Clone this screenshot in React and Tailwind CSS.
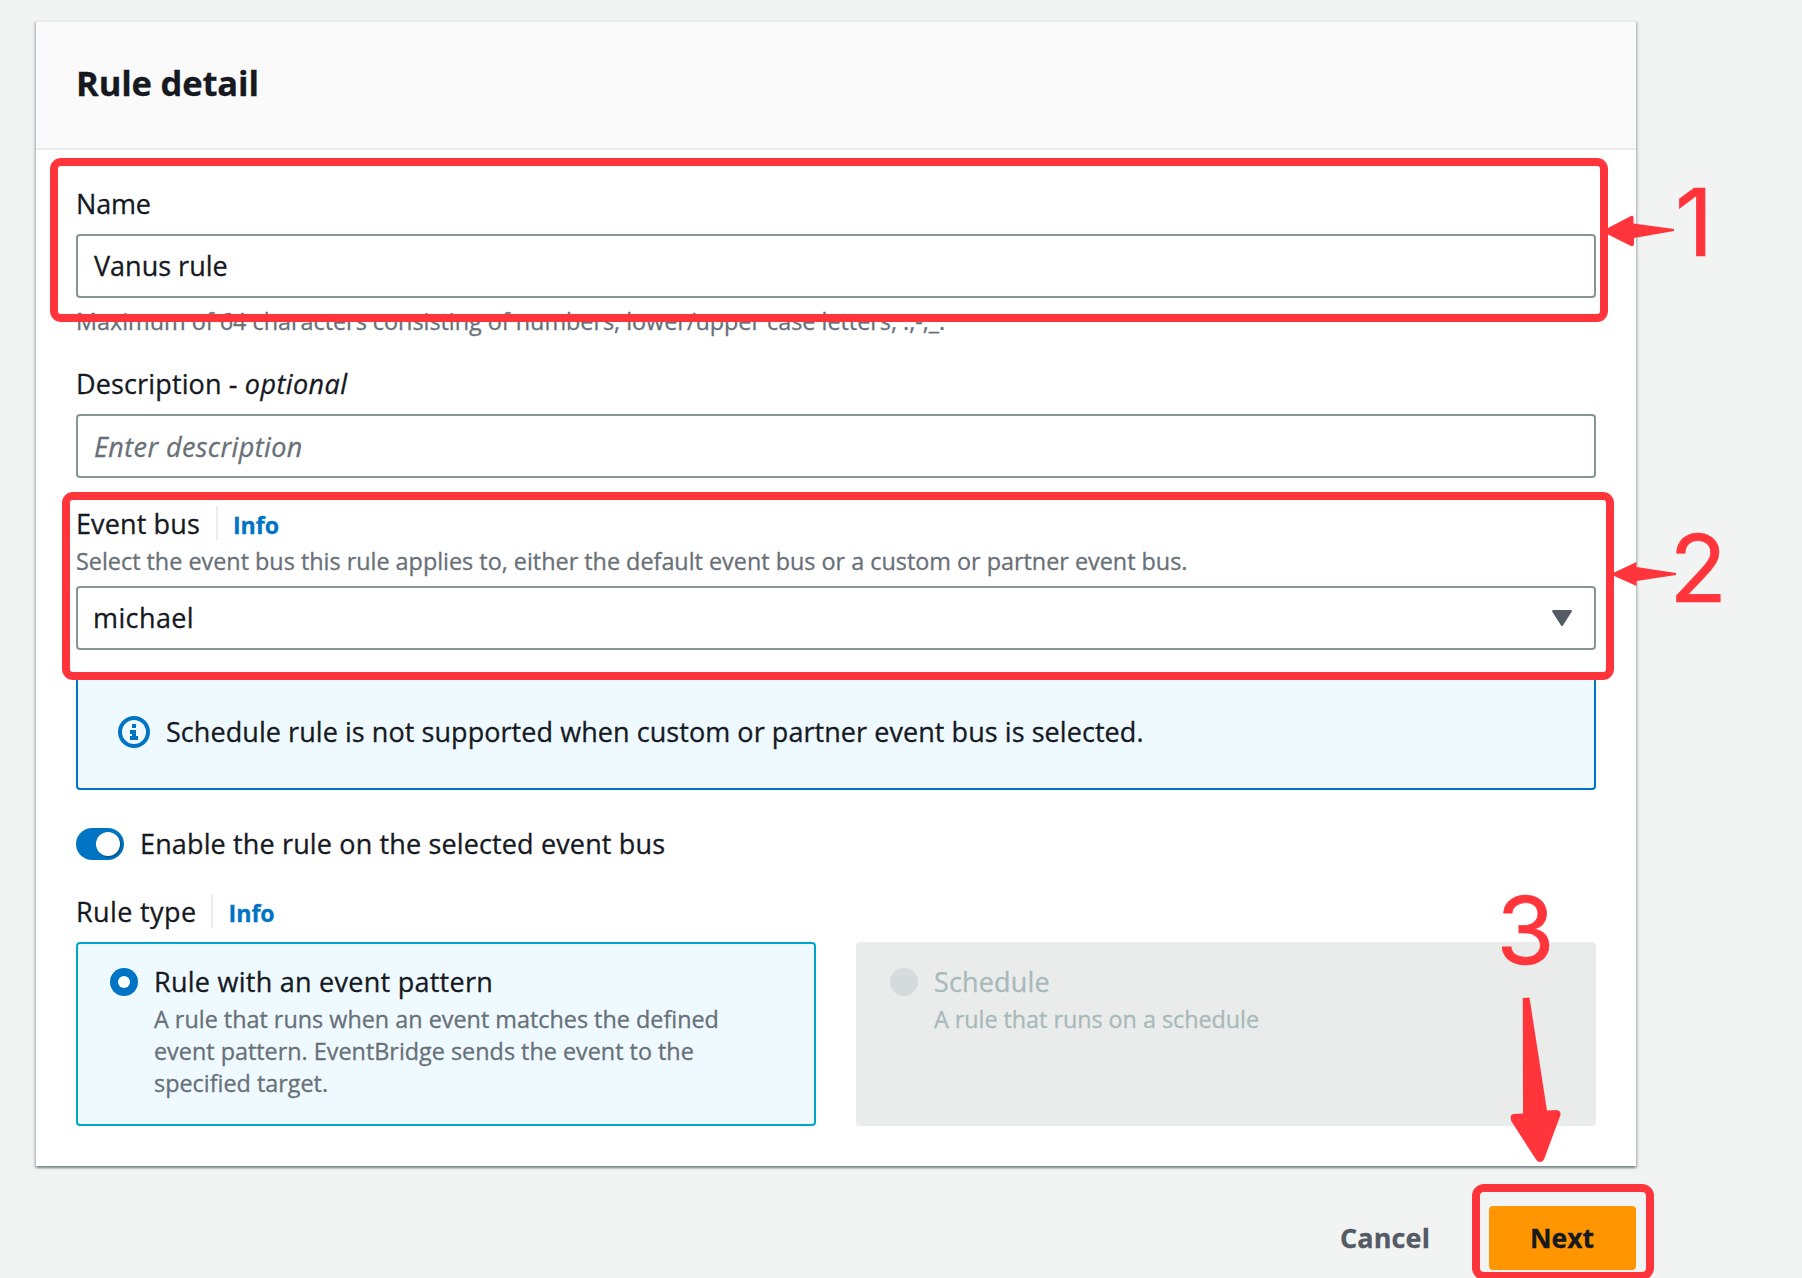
import React from 'react';

function InfoIcon() {
  return (
    <svg viewBox="0 0 32 32" className="h-8 w-8 shrink-0" fill="none">
      <circle cx="16" cy="16" r="14" stroke="#0074c4" strokeWidth="4" />
      <path d="M14 8h4v4h-4zM12 14h6v6h2v4h-8v-4h2v-2h-2z" fill="#0074c4" />
    </svg>
  );
}

function Field({ children, className = '' }) {
  return (
    <div className={`flex h-16 items-center rounded-[4px] border-2 border-[#879596] bg-white pr-4 ${className}`}>
      {children}
    </div>
  );
}

function InfoLink() {
  return (
    <a className="-mt-0.5 flex h-[34px] items-center border-l-2 border-[#eaeded] pl-[15px] pt-[3px] text-[23.2px] font-bold text-[#0074c4]">
      Info
    </a>
  );
}

function Callout({ children, className }) {
  return (
    <span
      className={`absolute font-['Inter',sans-serif] text-[94px] leading-[94px] text-[#ff353b] [-webkit-text-stroke:0.7px_#ff353b] ${className}`}
    >
      {children}
    </span>
  );
}

export default function App() {
  return (
    <div className="relative flex h-[1278px] w-[1802px] flex-col overflow-hidden bg-[#f2f3f3] pl-9 pt-5 font-['Open_Sans','Noto_Sans',sans-serif] text-[27px] leading-[44px] text-[#16191f] [-webkit-text-stroke:0.3px_currentColor]">
      <section className="w-[1600px] border-t-2 border-[#eaeceb] bg-white pb-10 shadow-[0_2px_2px_0_rgba(0,28,36,0.3),2px_2px_2px_0_rgba(0,28,36,0.15),-2px_2px_2px_0_rgba(0,28,36,0.15)]">
        <header className="h-32 border-b-2 border-[#eaeceb] bg-[#fafafa] pl-10 pt-[38.6px]">
          <h2 className="text-[34.5px] font-bold tracking-[-0.15px]">Rule detail</h2>
        </header>

        <div className="flex flex-col px-10 pt-8">
          <label className="tracking-[-0.2px]">Name</label>
          <Field className="mt-2 pl-4">Vanus rule</Field>
          <p className="mt-[7px] text-[23.4px] leading-8 tracking-[-0.02px] text-[#687078]">
            Maximum of 64 characters consisting of numbers, lower/upper case letters, .,-,_.
          </p>

          <label className="mt-[25px] tracking-[0.14px]">
            Description - <em className="tracking-[0.4px]">optional</em>
          </label>
          <Field className="mt-2 pl-4 pt-0.5 italic tracking-[0.4px] text-[#687078]">Enter description</Field>

          <div className="mt-6 flex items-center gap-4">
            <label className="tracking-[0.12px]">Event bus</label>
            <InfoLink />
          </div>
          <p className="-mt-px text-[23.4px] leading-8 tracking-[-0.01px] text-[#687078]">
            Select the event bus this rule applies to, either the default event bus or a custom or partner event bus.
          </p>
          <Field className="mt-[9px] justify-between pl-[15px] tracking-[0.4px]">
            michael
            <svg viewBox="0 0 20 16" className="mr-1.5 h-4 w-5">
              <path d="M1.2 1.2H18.8L10 14.8Z" fill="#545b64" stroke="#545b64" strokeWidth="2.2" strokeLinejoin="round" />
            </svg>
          </Field>

          <div className="mt-6 flex h-[116px] items-center gap-4 rounded-[4px] border-2 border-[#0074c4] bg-[#eefaff] pl-10 tracking-[0.06px]">
            <InfoIcon />
            Schedule rule is not supported when custom or partner event bus is selected.
          </div>

          <div className="mt-8 flex items-center gap-4 tracking-[0.14px]">
            <span className="flex h-8 w-12 items-center justify-end rounded-full bg-[#0074c4] pr-1">
              <span className="h-6 w-6 rounded-full bg-white shadow-[1px_1px_2px_rgba(0,0,0,0.4)]" />
            </span>
            Enable the rule on the selected event bus
          </div>

          <div className="mt-6 flex items-center gap-4">
            <label className="tracking-[0.38px]">Rule type</label>
            <div className="-ml-px">
              <InfoLink />
            </div>
          </div>

          <div className="mt-2 grid grid-cols-2 gap-10">
            <div className="flex h-[184px] gap-4 rounded-[4px] border-2 border-[#00a5cc] bg-[#eefaff] pl-8 pt-4">
              <span className="mt-2 flex h-7 w-7 shrink-0 items-center justify-center rounded-full bg-[#0074c4]">
                <span className="h-3 w-3 rounded-full bg-white" />
              </span>
              <div>
                <div className="tracking-[0.26px]">Rule with an event pattern</div>
                <p className="-mt-px w-[600px] text-[23.4px] leading-8 tracking-[-0.01px] text-[#687078]">
                  A rule that runs when an event matches the defined
                  <br />
                  event pattern. EventBridge sends the event to the
                  <br />
                  specified target.
                </p>
              </div>
            </div>
            <div className="flex h-[184px] gap-4 rounded-[4px] bg-[#eaeceb] pl-[34px] pt-[18px] text-[#a9b9b9]">
              <span className="mt-2 h-7 w-7 shrink-0 rounded-full bg-[#d4dbda]" />
              <div>
                <div className="tracking-[0.15px]">Schedule</div>
                <p className="-mt-px text-[23.4px] leading-8 tracking-[-0.05px]">A rule that runs on a schedule</p>
              </div>
            </div>
          </div>
        </div>
      </section>

      <footer className="mt-10 flex w-[1600px] items-center justify-end font-bold">
        <button className="mr-[59px] tracking-[0.1px] text-[#545b64]">Cancel</button>
        <button className="h-16 w-[147px] rounded-[4px] bg-[#ff9500] pr-px text-[26.5px]">Next</button>
      </footer>

      <div className="absolute left-[50px] top-[158px] h-[164px] w-[1558px] rounded-[11px] border-8 border-[#ff353b]" />
      <div className="absolute left-[62px] top-[492px] h-[188px] w-[1552px] rounded-[11px] border-8 border-[#ff353b]" />
      <div className="absolute left-[1472px] top-[1184px] h-24 w-[182px] rounded-[12px] border-8 border-[#ff353b]" />

      <Callout className="left-[1675px] top-[175px]">1</Callout>
      <Callout className="left-[1669.5px] top-[521px]">2</Callout>
      <Callout className="left-[1496.5px] top-[883px]">3</Callout>

      <svg viewBox="0 0 70 32" className="absolute left-[1605px] top-[215px] h-8 w-[70px]" fill="#ff353b">
        <path d="M0 14.500L26 1Q28.500 0 28.500 2.500V8.500L69 14V16L29 23V29.500Q28.500 32 26 31L0 18Z" />
      </svg>
      <svg viewBox="0 0 64 24" className="absolute left-[1612px] top-[562px] h-6 w-16" fill="#ff353b">
        <path d="M0 11.500L24.500 0V5L64 11V13L24.500 19V24L0 13Z" />
      </svg>
      <svg viewBox="0 0 52 166" className="absolute left-[1510px] top-[997px] h-[166px] w-[52px]" fill="#ff353b">
        <path d="M12.800 1L19.500 .6L37 113.600L46.500 113Q51.500 113.500 50.300 118.500L34 162.500Q32.500 165 30 165Q27.500 165 26 162.500L1.500 124.500Q-1 118 3.500 117L13 116.500Z" />
      </svg>
    </div>
  );
}
